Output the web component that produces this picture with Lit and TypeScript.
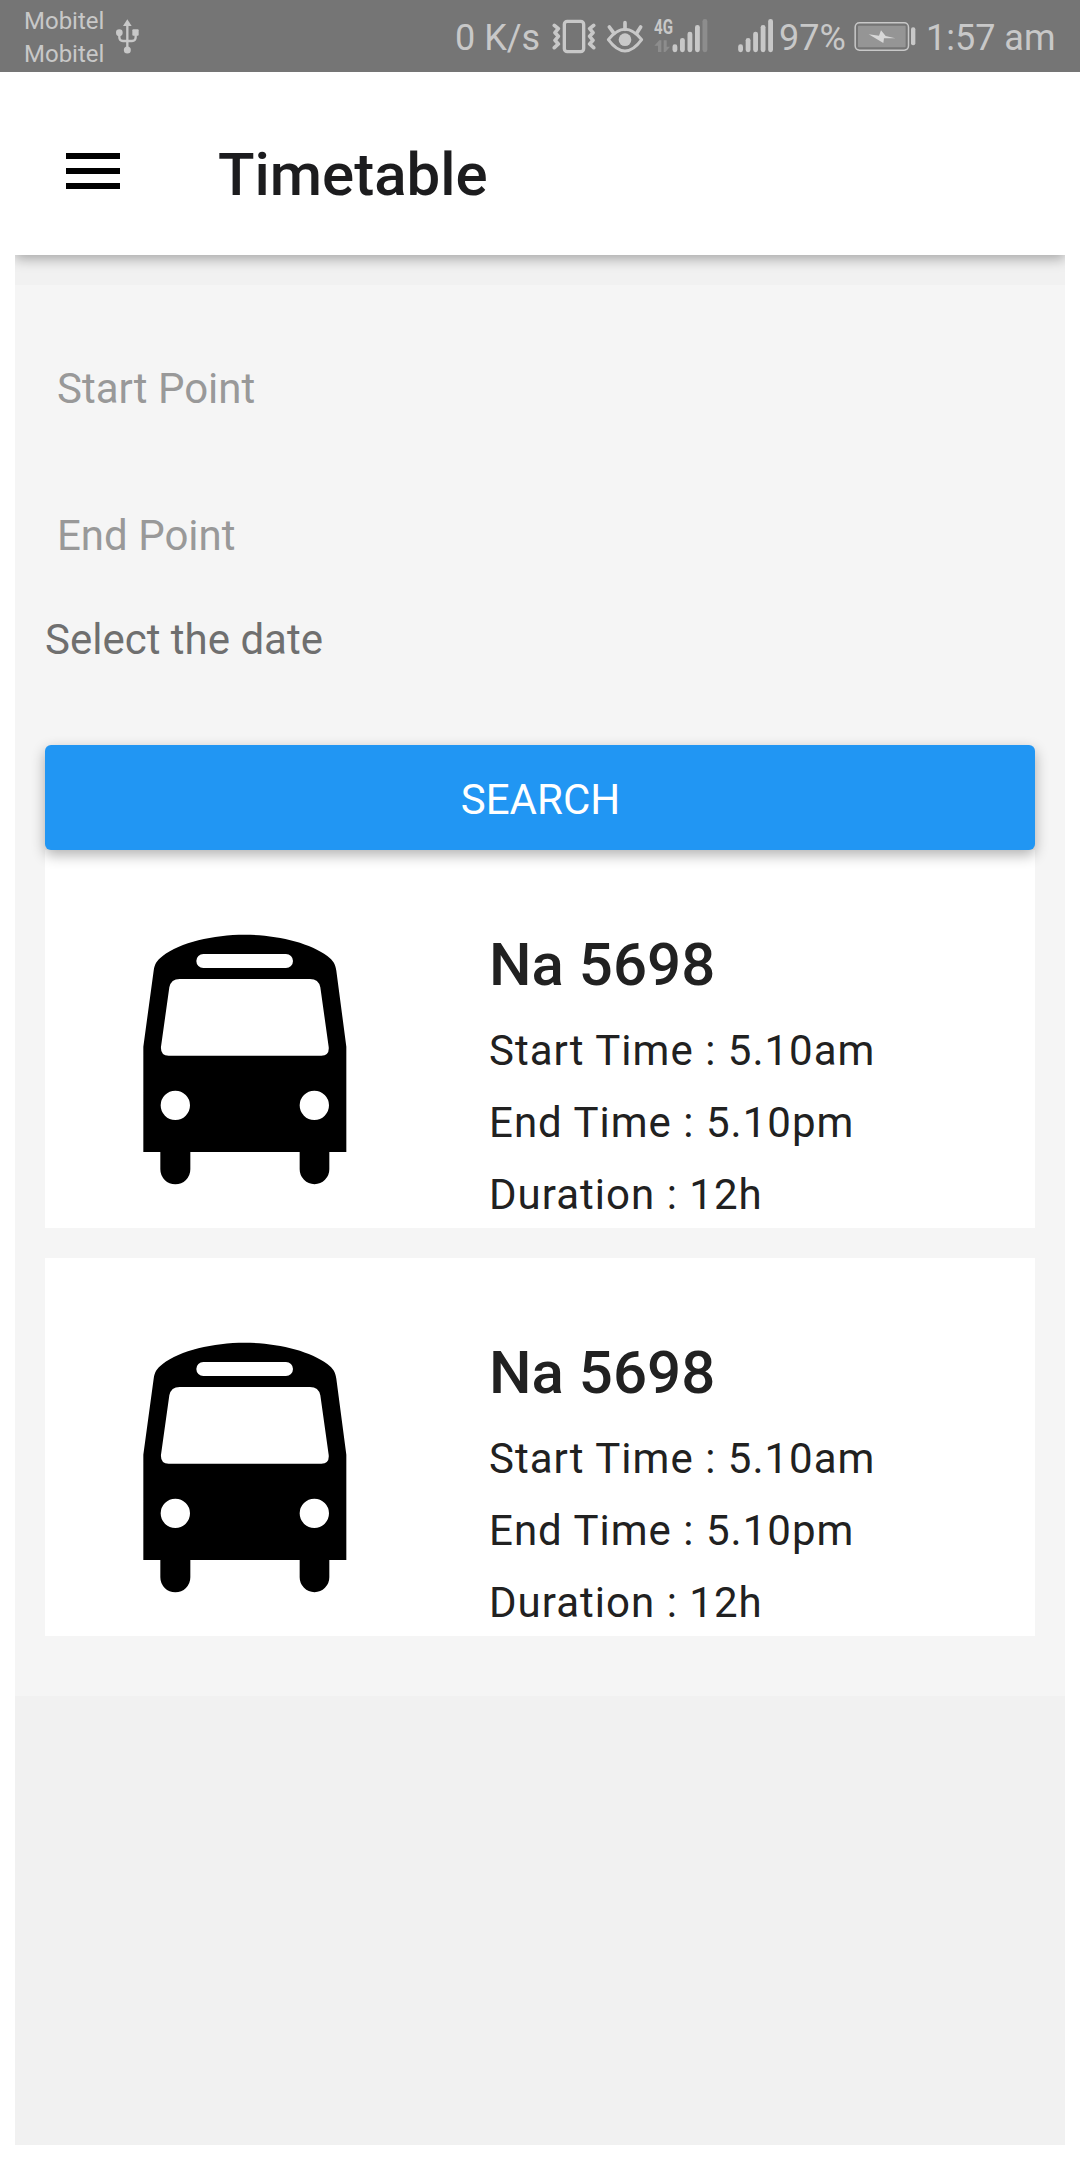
import { LitElement, html, css, svg } from "lit";
import { customElement, property, state } from "lit/decorators.js";

interface Trip {
  name: string;
  start: string;
  end: string;
  duration: string;
}

const BAR_TOPS = [133, 114, 95, 75, 57];

/** Signal bars; `active` bars are bright, the rest are dimmed. */
const bars = (x: number, active: number) =>
  BAR_TOPS.map(
    (top, i) => svg`<rect x=${x + i * 22.5} y=${top} width="14.5" height=${156.5 - top} rx="7"
      fill=${i < active ? "#c8c8c8" : "#8d8d8d"}></rect>`
  );

@customElement("status-bar")
export class StatusBar extends LitElement {
  static styles = css`
    :host {
      display: flex;
      height: 72px;
      background: #757575;
      color: #c8c8c8;
      font-family: Roboto, "Noto Sans", sans-serif;
      font-size: 36px;
      line-height: 77px;
      white-space: nowrap;
    }
    svg {
      display: block;
      flex: none;
      height: 72px;
    }
    .carriers {
      width: 92px;
      padding: 5px 0 0 24px;
      font-size: 24px;
      line-height: 33px;
    }
    .usb { width: 23px; }
    .speed { width: 97px; margin-left: 316px; }
    .vibrate { width: 44px; margin-right: 10px; }
    .eye { width: 38px; margin-right: 10px; }
    .lte { width: 54px; margin-right: 30px; }
    .signal { width: 36px; }
    .percent { width: 75px; padding-left: 5px; }
    .battery { width: 62px; }
    .clock { padding-left: 10px; }
    .net { font: 700 21px Roboto, sans-serif; }
  `;

  render() {
    return html`
      <div class="carriers"><div>Mobitel</div><div>Mobitel</div></div>
      <svg class="usb" viewBox="348 0 69 216" fill="#c8c8c8">
        <path d="M382 58 395 78H369Z"></path>
        <path d="M382 74V150M358 98V112Q358 123 369 123H396Q407 123 407 112V98" fill="none" stroke="#c8c8c8" stroke-width="7"></path>
        <circle cx="358" cy="98" r="10"></circle>
        <rect x="397" y="88" width="19" height="19" rx="3"></rect>
        <circle cx="382" cy="150" r="10.5"></circle>
      </svg>
      <div class="speed">0 K/s</div>
      <svg class="vibrate" viewBox="336 0 132 216" fill="none" stroke="#c8c8c8" stroke-linecap="round" stroke-linejoin="round">
        <rect x="373" y="64" width="58" height="91" rx="9" stroke-width="10"></rect>
        <path d="M343 76 355 86 345 98 355 109 345 121 355 132 343 143M461 76 449 86 459 98 449 109 459 121 449 132 461 143" stroke-width="11"></path>
      </svg>
      <svg class="eye" viewBox="498 0 114 216" fill="none" stroke="#c8c8c8" stroke-linecap="round">
        <path d="M505 119Q555 57 605 119Q555 187 505 119Z" stroke-width="9" stroke-linejoin="round"></path>
        <circle cx="555" cy="119" r="19" fill="#c8c8c8" stroke="none"></circle>
        <path d="M555 68V88M508 81 522 100M602 81 590 100" stroke-width="11"></path>
      </svg>
      <svg class="lte" viewBox="644 0 162 216">
        <text class="net" transform="translate(644 101) scale(3)" textLength="19" lengthAdjust="spacingAndGlyphs" fill="#c8c8c8">4G</text>
        <path d="M645 137 660 121H666V156H656V137ZM673 121H682V140H692L678 156H673Z" fill="#8d8d8d"></path>
        ${bars(699.5, 4)}
      </svg>
      <svg class="signal" viewBox="54 0 108 216">${bars(54.5, 5)}</svg>
      <div class="percent">97%</div>
      <svg class="battery" viewBox="402 0 186 216">
        <rect x="405.5" y="68.5" width="160" height="82" rx="13" fill="none" stroke="#c8c8c8" stroke-width="4.5"></rect>
        <rect x="414" y="77" width="143" height="65" rx="3" fill="#959595"></rect>
        <path d="M446 103 477 107 483 91 497 108 526 115 492 115 490 129Z" fill="#d8d8d8"></path>
        <rect x="573" y="82" width="13" height="54" rx="6" fill="#c8c8c8"></rect>
      </svg>
      <div class="clock">1:57 am</div>
    `;
  }
}

@customElement("trip-card")
export class TripCard extends LitElement {
  static styles = css`
    :host {
      display: grid;
      grid-template-columns: 444px 1fr;
      height: 378px;
      background: #fff;
      color: #212121;
    }
    .bus {
      width: 205.33px;
      height: 252px;
      margin: 83px 0 0 97px;
    }
    .info {
      padding-top: 70px;
      font-size: 42px;
      line-height: 60px;
      letter-spacing: 1.02px;
    }
    .name {
      margin: 0 0 11px;
      font-size: 60px;
      font-weight: 500;
      line-height: 90px;
      letter-spacing: 0;
    }
    .line {
      margin: 0 0 12px;
    }
  `;

  @property({ attribute: false }) trip!: Trip;

  render() {
    const { name, start, end, duration } = this.trip;
    return html`
      <svg class="bus" viewBox="66 99 616 756">
        <path fill-rule="evenodd" d="M70 440 101 212C104 192 110 182 128 168C180 127 280 104 374 104C468 104 568 127 622 168C640 182 646 192 649 212L679 440V756H628V808A44 44 0 0 1 539 808V756H211V808A44 44 0 0 1 121 808V756H70Z
          M250 162A21 21 0 0 0 250 204H498A21 21 0 0 0 498 162Z
          M179 237Q153 237 148 262L123 440Q121 467 146 467H604Q629 467 626 440L601 262Q596 237 570 237Z
          M122 616A44 44 0 0 0 210 616A44 44 0 0 0 122 616Z
          M539 616A44 44 0 0 0 627 616A44 44 0 0 0 539 616Z"></path>
      </svg>
      <div class="info">
        <h2 class="name">${name}</h2>
        <p class="line">Start Time : ${start}</p>
        <p class="line">End Time : ${end}</p>
        <p class="line">Duration : ${duration}</p>
      </div>
    `;
  }
}

@customElement("app-root")
export class AppRoot extends LitElement {
  static styles = css`
    :host {
      display: flex;
      flex-direction: column;
      width: 1080px;
      height: 2160px;
      overflow: hidden;
      background: #fff;
      font-family: Roboto, "Noto Sans", sans-serif;
    }
    * { box-sizing: border-box; }
    .screen {
      flex: 1;
      display: flex;
      flex-direction: column;
      margin: 0 15px 15px;
      overflow: hidden;
      background: #f1f1f1;
    }
    .header {
      position: relative;
      flex: none;
      display: flex;
      align-items: flex-start;
      height: 183px;
      padding-left: 51px;
      background: #fff;
      box-shadow: 0 4px 12px rgba(0, 0, 0, 0.31);
    }
    .menu {
      display: grid;
      gap: 9px;
      width: 54px;
      margin-top: 81px;
      padding: 0;
      border: 0;
      background: none;
    }
    .menu span {
      height: 6px;
      background: #000;
    }
    .title {
      margin: 67px 0 0 98px;
      color: #1c1c1e;
      font-size: 60px;
      font-weight: 500;
      line-height: 71px;
    }
    .panel {
      margin-top: 30px;
      padding: 30px 30px 60px;
      background: #f5f5f5;
      font-size: 42px;
    }
    .field {
      display: block;
      width: 100%;
      height: 147px;
      padding: 0 12px;
      border: 0;
      background: none;
      color: #212121;
      font: inherit;
    }
    .field::placeholder {
      color: #999;
      opacity: 1;
    }
    .label {
      height: 136px;
      margin: 0;
      color: #6f6f6f;
      line-height: 61px;
    }
    .search {
      position: relative;
      display: block;
      width: 100%;
      height: 105px;
      padding: 4px 0 0 1px;
      border: 0;
      border-radius: 6px;
      background: #2196f3;
      box-shadow: 0 5px 14px rgba(0, 0, 0, 0.31);
      color: #fff;
      font: inherit;
    }
    .trips {
      display: grid;
      gap: 30px;
    }
  `;

  @state() private trips: Trip[] = [
    { name: "Na 5698", start: "5.10am", end: "5.10pm", duration: "12h" },
    { name: "Na 5698", start: "5.10am", end: "5.10pm", duration: "12h" },
  ];

  render() {
    return html`
      <status-bar></status-bar>
      <div class="screen">
        <header class="header">
          <button class="menu" aria-label="Menu"><span></span><span></span><span></span></button>
          <h1 class="title">Timetable</h1>
        </header>
        <main class="panel">
          <input class="field" placeholder="Start Point" />
          <input class="field" placeholder="End Point" />
          <p class="label">Select the date</p>
          <button class="search">SEARCH</button>
          <section class="trips">
            ${this.trips.map((trip) => html`<trip-card .trip=${trip}></trip-card>`)}
          </section>
        </main>
      </div>
    `;
  }
}
